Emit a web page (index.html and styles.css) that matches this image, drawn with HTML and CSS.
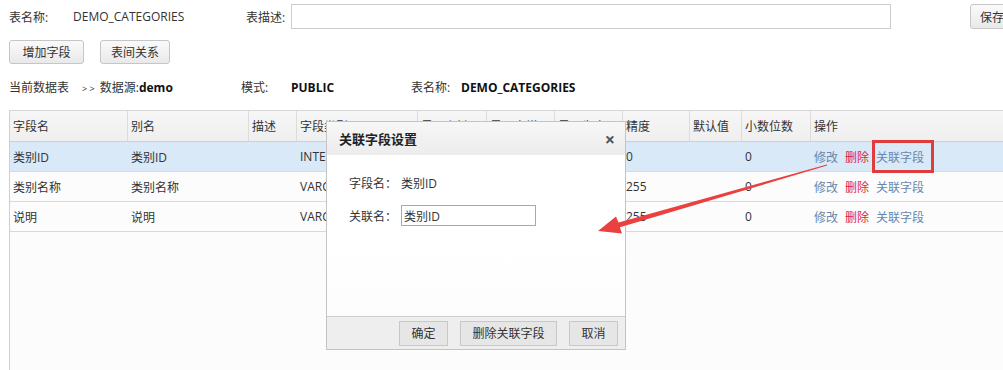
FILE: index.html
```html
<!DOCTYPE html>
<html lang="zh-CN">
<head>
    <meta charset="UTF-8">
    <title>表字段设置</title>
    <link rel="stylesheet" href="styles.css">
</head>
<body>
    <div class="page">
        <div class="top-row">
            <span class="lbl name-lbl">表名称:</span>
            <span class="name-val">DEMO_CATEGORIES</span>
            <span class="lbl desc-lbl">表描述:</span>
            <input class="desc-input" type="text">
            <button class="btn save-btn">保存</button>
        </div>

        <div class="tool-row">
            <button class="btn">增加字段</button>
            <button class="btn">表间关系</button>
        </div>

        <div class="info-row">
            <span class="info-a">当前数据表</span>
            <span class="info-b"><small>&gt; &gt;</small> 数据源:<b>demo</b></span>
            <span class="info-c">模式:</span>
            <b class="info-d">PUBLIC</b>
            <span class="info-c">表名称:</span>
            <b>DEMO_CATEGORIES</b>
        </div>

        <div class="grid">
            <div class="grid-row grid-head">
                <div>字段名</div>
                <div>别名</div>
                <div>描述</div>
                <div>字段类型</div>
                <div>是否主键</div>
                <div>是否自增</div>
                <div>是否为空</div>
                <div>精度</div>
                <div>默认值</div>
                <div>小数位数</div>
                <div>操作</div>
            </div>
            <div class="grid-row selected">
                <div>类别ID</div>
                <div>类别ID</div>
                <div></div>
                <div>INTEGER</div>
                <div></div>
                <div></div>
                <div></div>
                <div>0</div>
                <div></div>
                <div>0</div>
                <div class="ops"><a class="edit">修改</a><a class="del">删除</a><a class="rel">关联字段</a></div>
            </div>
            <div class="grid-row">
                <div>类别名称</div>
                <div>类别名称</div>
                <div></div>
                <div>VARCHAR</div>
                <div></div>
                <div></div>
                <div></div>
                <div>255</div>
                <div></div>
                <div>0</div>
                <div class="ops"><a class="edit">修改</a><a class="del">删除</a><a class="rel">关联字段</a></div>
            </div>
            <div class="grid-row">
                <div>说明</div>
                <div>说明</div>
                <div></div>
                <div>VARCHAR</div>
                <div></div>
                <div></div>
                <div></div>
                <div>255</div>
                <div></div>
                <div>0</div>
                <div class="ops"><a class="edit">修改</a><a class="del">删除</a><a class="rel">关联字段</a></div>
            </div>
        </div>
    </div>

    <div class="dialog">
        <div class="dialog-title">
            <span>关联字段设置</span>
            <span class="close">&#215;</span>
        </div>
        <div class="dialog-body">
            <div class="form-line"><span class="form-lbl">字段名：</span>类别ID</div>
            <div class="form-line"><span class="form-lbl">关联名：</span><input class="form-input" type="text" value="类别ID"></div>
        </div>
        <div class="dialog-foot">
            <button class="btn foot-btn">确定</button>
            <button class="btn foot-btn">删除关联字段</button>
            <button class="btn foot-btn">取消</button>
        </div>
    </div>

    <div class="mark-box"></div>
    <svg class="mark-arrow" width="1003" height="370" viewBox="0 0 1003 370">
        <polygon points="826.9,164.5 618.5,222.5 616,216.5 598,231 622,233.5 619.9,227.3 827.1,165.6" fill="#e8413f"/>
    </svg>
</body>
</html>
```

FILE: styles.css
```css
html, body {
    margin: 0;
    overflow: hidden;
    background-color: #fff;
}
body {
    font-family: "Open Sans", "Noto Sans CJK SC", sans-serif;
    font-size: 12px;
    color: #333;
    width: 1003px;
    height: 370px;
}
.page {
    width: 1060px;
    padding: 4px 0 0 9px;
}
.top-row {
    display: flex;
    align-items: center;
    height: 25px;
}
.name-lbl {
    width: 64px;
}
.name-val {
    width: 173px;
}
.desc-lbl {
    width: 45px;
}
.desc-input {
    width: 600px;
    height: 25px;
    margin: 0;
    padding: 0 4px;
    box-sizing: border-box;
    border: 1px solid #ccc;
}
.btn {
    font-family: inherit;
    font-size: 12px;
    color: #333;
    background: linear-gradient(#fafafa, #e9e9e9);
    border: 1px solid #c6c6c6;
    border-radius: 3px;
    height: 24px;
    padding: 0 10px;
    cursor: pointer;
}
.save-btn {
    margin-left: 79px;
    height: 25px;
    width: 54px;
    text-align: left;
    padding: 0 0 0 9px;
}
.tool-row {
    display: flex;
    gap: 16px;
    margin-top: 11px;
}
.tool-row .btn {
    width: 75px;
    padding: 0;
}
.tool-row .btn + .btn {
    width: 70px;
}
.info-row {
    display: flex;
    align-items: center;
    height: 22px;
    margin-top: 12px;
}
.info-row b {
    font-weight: bold;
    color: #111;
}
.info-row small {
    font-size: 9px;
    margin-right: 2px;
}
.info-a {
    width: 73px;
}
.info-b {
    width: 159px;
}
.info-c {
    width: 50px;
}
.info-d {
    width: 120px;
}
.grid {
    margin-top: 12px;
    border-top: 1px solid #d6d6d6;
    border-left: 1px solid #cfcfcf;
    background-color: #fcfcfc;
    height: 260px;
}
.grid-row {
    display: grid;
    grid-template-columns: 118px 121px 48px 121px 69px 68px 68px 67px 52px 69px 1fr;
    height: 30px;
    box-sizing: border-box;
    align-items: center;
    border-bottom: 1px solid #d9d9d9;
}
.grid-row > div {
    padding-left: 3px;
    height: 100%;
    display: flex;
    align-items: center;
    white-space: nowrap;
    overflow: hidden;
}
.grid-head {
    height: 31px;
    background: linear-gradient(#f6f6f6, #efefef);
    border-bottom: 1px solid #cfcfcf;
}
.grid-head > div {
    border-right: 1px solid #dcdcdc;
}
.grid-row.selected {
    background-color: #d9e9f7;
}
.ops a {
    margin-right: 7px;
    cursor: pointer;
}
.ops .edit, .ops .rel {
    color: #6a87ab;
}
.ops .del {
    color: #e0262c;
}
.dialog {
    position: absolute;
    left: 326px;
    top: 121px;
    width: 298px;
    height: 227px;
    border: 1px solid #c4c4c4;
    background: linear-gradient(#fff 55%, #fbfbfb);
    display: flex;
    flex-direction: column;
}
.dialog-title {
    height: 33px;
    display: flex;
    align-items: center;
    justify-content: space-between;
    padding: 0 10px 0 12px;
    background: linear-gradient(#f7f7f7, #ececec);
    font-size: 13px;
    font-weight: bold;
    color: #222;
}
.close {
    font-size: 18px;
    font-weight: bold;
    color: #555;
}
.dialog-body {
    flex: 1;
    padding: 17px 0 0 22px;
}
.form-line {
    display: flex;
    align-items: center;
    height: 21px;
    margin-bottom: 12px;
}
.form-lbl {
    width: 52px;
}
.form-input {
    width: 135px;
    height: 21px;
    box-sizing: border-box;
    margin: 0;
    padding: 0 2px;
    border: 1px solid #a9a9a9;
    font-family: inherit;
    font-size: 12px;
    color: #333;
}
.dialog-foot {
    height: 32px;
    border-top: 1px solid #cdcdcd;
    background-color: #eeeeee;
    display: flex;
    align-items: center;
    justify-content: flex-end;
    gap: 12px;
    padding-right: 7px;
}
.foot-btn {
    height: 25px;
    width: 49px;
    padding: 0;
    border-radius: 0;
    background: #e6e6e6;
    border: 1px solid #c8c8c8;
}
.foot-btn:nth-child(2) {
    width: 97px;
}
.mark-box {
    position: absolute;
    left: 872px;
    top: 140px;
    width: 56px;
    height: 27px;
    border: 3px solid #e03c3c;
}
.mark-arrow {
    position: absolute;
    left: 0;
    top: 0;
    pointer-events: none;
}
```
